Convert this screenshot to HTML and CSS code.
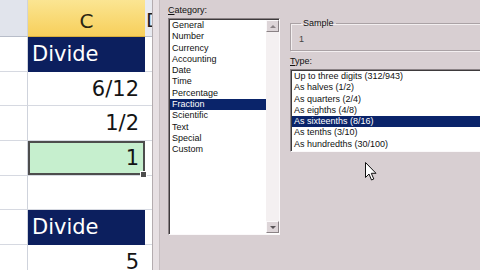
FILE: index.html
```html
<!DOCTYPE html>
<html lang="en">

<head>
    <meta charset="UTF-8">
    <title>Format Cells - Fraction</title>
    <link rel="stylesheet" href="styles.css">
</head>

<body>
    <div class="sheet">
        <div class="cell col-a hdr"></div>
        <div class="cell col-c hdr-c">C</div>
        <div class="cell col-d hdr-d">D</div>

        <div class="cell col-a"></div>
        <div class="cell col-c title">Divide</div>
        <div class="cell col-d"></div>

        <div class="cell col-a"></div>
        <div class="cell col-c">6/12</div>
        <div class="cell col-d"></div>

        <div class="cell col-a"></div>
        <div class="cell col-c">1/2</div>
        <div class="cell col-d"></div>

        <div class="cell col-a"></div>
        <div class="cell col-c selected">1</div>
        <div class="cell col-d"></div>

        <div class="cell col-a"></div>
        <div class="cell col-c"></div>
        <div class="cell col-d"></div>

        <div class="cell col-a"></div>
        <div class="cell col-c title">Divide</div>
        <div class="cell col-d"></div>

        <div class="cell col-a"></div>
        <div class="cell col-c">5</div>
        <div class="cell col-d"></div>
    </div>

    <div class="frame"></div>

    <div class="dialog">
        <div class="category">
            <div class="label"><u>C</u>ategory:</div>
            <div class="listbox cat-box">
                <ul class="items">
                    <li>General</li>
                    <li>Number</li>
                    <li>Currency</li>
                    <li>Accounting</li>
                    <li>Date</li>
                    <li>Time</li>
                    <li>Percentage</li>
                    <li class="on">Fraction</li>
                    <li>Scientific</li>
                    <li>Text</li>
                    <li>Special</li>
                    <li>Custom</li>
                </ul>
                <div class="scrollbar">
                    <div class="arrow-btn"><span class="tri up"></span></div>
                    <div class="arrow-btn"><span class="tri down"></span></div>
                </div>
            </div>
        </div>

        <div class="options">
            <fieldset class="sample">
                <legend>Sample</legend>
                <div class="sample-value">1</div>
            </fieldset>
            <div class="label type-label"><u>T</u>ype:</div>
            <div class="listbox type-box">
                <ul class="items">
                    <li>Up to three digits (312/943)</li>
                    <li>As halves (1/2)</li>
                    <li>As quarters (2/4)</li>
                    <li>As eighths (4/8)</li>
                    <li class="on">As sixteenths (8/16)</li>
                    <li>As tenths (3/10)</li>
                    <li>As hundredths (30/100)</li>
                </ul>
            </div>
        </div>
    </div>

    <!-- mouse pointer -->
    <svg class="cursor" width="12" height="19" viewBox="0 0 12 19">
        <path d="M0.5 0.5 L0.5 15.5 L4 12 L6.5 18 L8.8 17 L6.3 11.3 L11 11.3 Z" fill="#fff" stroke="#111" stroke-width="1" stroke-linejoin="round" />
    </svg>
</body>

</html>
```

FILE: styles.css
```css
* {
    box-sizing: border-box;
}

body {
    margin: 0;
    width: 480px;
    height: 270px;
    overflow: hidden;
    display: flex;
    position: relative;
    background-color: #d8cfd2;
    font-family: 'Liberation Sans', Arial, sans-serif;
}

/* spreadsheet */

.sheet {
    width: 152px;
    flex-shrink: 0;
    display: grid;
    grid-template-columns: 28px 117px 7px;
    grid-template-rows: 37px;
    grid-auto-rows: 34.7px;
    background-color: #fff;
    font-family: 'DejaVu Sans', sans-serif;
    font-size: 21px;
    color: #141414;
}

.cell {
    border-bottom: 1px solid #d6d9e1;
}

.col-a {
    border-right: 1px solid #cfd3dc;
}

.hdr {
    background-color: #e1e4ec;
    border-bottom: 1px solid #b8bdc9;
}

.col-c {
    display: flex;
    align-items: center;
    justify-content: flex-end;
    padding-right: 6px;
}

.hdr-c {
    justify-content: center;
    padding-right: 0;
    padding-top: 6px;
    background: linear-gradient(#fbe592, #f7cf5b);
    border-bottom: 1px solid #d9ae3c;
    color: #2b2512;
    font-size: 20px;
}

.hdr-d {
    overflow: hidden;
    display: flex;
    align-items: center;
    padding-left: 1px;
    padding-top: 4px;
    background-color: #e8eaf0;
    border-bottom: 1px solid #b8bdc9;
    font-size: 20px;
    color: #1c1c1c;
}

.title {
    justify-content: flex-start;
    padding-left: 4px;
    background-color: #0c1f5e;
    border-bottom-color: #0c1f5e;
    color: #fff;
}

.selected {
    position: relative;
    background-color: #c6efce;
    box-shadow: inset 0 0 0 2px #4d4d4d;
    padding-right: 6px;
}

.selected::after {
    content: '';
    position: absolute;
    right: -2px;
    bottom: -3px;
    width: 5px;
    height: 5px;
    background-color: #4d4d4d;
    border: 1px solid #fff;
}

/* dialog frame */

.frame {
    width: 8px;
    flex-shrink: 0;
    background-color: #e7e0e3;
    border-left: 1px solid #b4acaf;
    border-right: 1px solid #c6bec1;
}

.dialog {
    flex: 1;
    display: flex;
    gap: 10px;
    padding: 4px 0 0 8px;
    font-size: 9px;
    color: #111;
    overflow: hidden;
}

.label {
    height: 12px;
    line-height: 12px;
    margin-bottom: 2px;
}

.listbox {
    background-color: #fff;
    border: 1px solid;
    border-color: #8a8285 #fbf9fa #fbf9fa #8a8285;
    box-shadow: inset 1px 1px 0 #3e3a3c;
}

.items {
    list-style: none;
    margin: 0;
    padding: 1px 0 0 1px;
}

.items li {
    height: 11.3px;
    line-height: 11.3px;
    padding-left: 2px;
    white-space: nowrap;
}

.items li.on {
    background-color: #0a246a;
    color: #fff;
}

/* category list */

.category {
    width: 112px;
    flex-shrink: 0;
}

.cat-box {
    height: 217px;
    display: flex;
}

.cat-box .items {
    flex: 1;
}

.scrollbar {
    width: 13px;
    margin: 1px 0;
    display: flex;
    flex-direction: column;
    justify-content: space-between;
    background-color: #f4f0f1;
}

.arrow-btn {
    height: 12px;
    display: flex;
    align-items: center;
    justify-content: center;
    background-color: #ddd5d8;
    border: 1px solid;
    border-color: #fbf9fa #8a8285 #8a8285 #fbf9fa;
}

.tri {
    width: 0;
    height: 0;
    border-left: 3px solid transparent;
    border-right: 3px solid transparent;
}

.tri.up {
    border-bottom: 3px solid #8a8285;
}

.tri.down {
    border-top: 3px solid #5a5558;
}

/* sample + type */

.options {
    width: 200px;
    flex-shrink: 0;
    padding-top: 14px;
}

.sample {
    margin: 0;
    height: 33px;
    padding: 5px 0 0 8px;
    border: 1px solid #aaa2a5;
    border-right: none;
    box-shadow: 1px 1px 0 #f3eff0, inset 1px 1px 0 #f3eff0;
}

.sample legend {
    padding: 0 2px;
    margin-left: 2px;
    line-height: 11px;
}

.sample-value {
    line-height: 11px;
    color: #444;
}

.type-label {
    margin-top: 4px;
}

.type-box {
    height: 83px;
    border-right: none;
}

.cursor {
    position: absolute;
    left: 365px;
    top: 162px;
}
```
